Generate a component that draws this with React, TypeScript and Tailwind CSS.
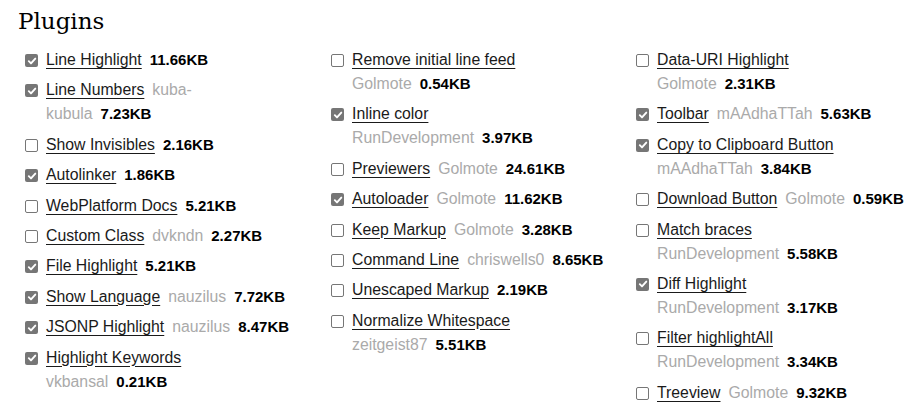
type Plugin = {
  name: string;
  author?: string;
  size: string;
  checked?: boolean;
  // where the item wraps: "meta" puts author + size on a second line,
  // "author" splits the author name itself (kuba-/kubula)
  wrap?: "meta" | "author";
  authorTail?: string;
};

const columns: Plugin[][] = [
  [
    { name: "Line Highlight", size: "11.66KB", checked: true },
    { name: "Line Numbers", author: "kuba-", authorTail: "kubula", size: "7.23KB", checked: true, wrap: "author" },
    { name: "Show Invisibles", size: "2.16KB" },
    { name: "Autolinker", size: "1.86KB", checked: true },
    { name: "WebPlatform Docs", size: "5.21KB" },
    { name: "Custom Class", author: "dvkndn", size: "2.27KB" },
    { name: "File Highlight", size: "5.21KB", checked: true },
    { name: "Show Language", author: "nauzilus", size: "7.72KB", checked: true },
    { name: "JSONP Highlight", author: "nauzilus", size: "8.47KB", checked: true },
    { name: "Highlight Keywords", author: "vkbansal", size: "0.21KB", checked: true, wrap: "meta" },
  ],
  [
    { name: "Remove initial line feed", author: "Golmote", size: "0.54KB", wrap: "meta" },
    { name: "Inline color", author: "RunDevelopment", size: "3.97KB", checked: true, wrap: "meta" },
    { name: "Previewers", author: "Golmote", size: "24.61KB" },
    { name: "Autoloader", author: "Golmote", size: "11.62KB", checked: true },
    { name: "Keep Markup", author: "Golmote", size: "3.28KB" },
    { name: "Command Line", author: "chriswells0", size: "8.65KB" },
    { name: "Unescaped Markup", size: "2.19KB" },
    { name: "Normalize Whitespace", author: "zeitgeist87", size: "5.51KB", wrap: "meta" },
  ],
  [
    { name: "Data-URI Highlight", author: "Golmote", size: "2.31KB", wrap: "meta" },
    { name: "Toolbar", author: "mAAdhaTTah", size: "5.63KB", checked: true },
    { name: "Copy to Clipboard Button", author: "mAAdhaTTah", size: "3.84KB", checked: true, wrap: "meta" },
    { name: "Download Button", author: "Golmote", size: "0.59KB" },
    { name: "Match braces", author: "RunDevelopment", size: "5.58KB", wrap: "meta" },
    { name: "Diff Highlight", author: "RunDevelopment", size: "3.17KB", checked: true, wrap: "meta" },
    { name: "Filter highlightAll", author: "RunDevelopment", size: "3.34KB", wrap: "meta" },
    { name: "Treeview", author: "Golmote", size: "9.32KB" },
  ],
];

function Box({ checked }: { checked?: boolean }) {
  if (checked) {
    return (
      <span className="mt-[6px] flex h-[13px] w-[13px] shrink-0 items-center justify-center rounded-[2px] bg-[#767676]">
        <svg width="10" height="10" viewBox="0 0 10 10">
          <path d="M1.8 5.2 L4 7.4 L8.3 2.6" fill="none" stroke="#fff" strokeWidth="1.9" strokeLinecap="round" strokeLinejoin="round" />
        </svg>
      </span>
    );
  }
  return <span className="mt-[6px] h-[13px] w-[13px] shrink-0 rounded-[2px] border border-[#767676] bg-white" />;
}

function Item({ p }: { p: Plugin }) {
  const author = (text?: string) =>
    text ? <span className="mr-2 text-[#aaaaaa]">{text}</span> : null;
  const size = <strong className="text-[15px] font-bold text-black">{p.size}</strong>;
  const link = <a className="mr-2 text-[#1a1a1a] underline underline-offset-[3px]">{p.name}</a>;

  return (
    <div className="flex gap-[8px]">
      <Box checked={p.checked} />
      <div className="whitespace-nowrap leading-6">
        {p.wrap === "meta" ? (
          <>
            {link}
            <br />
            {author(p.author)}
            {size}
          </>
        ) : p.wrap === "author" ? (
          <>
            {link}
            <span className="text-[#aaaaaa]">{p.author}</span>
            <br />
            {author(p.authorTail)}
            {size}
          </>
        ) : (
          <>
            {link}
            {author(p.author)}
            {size}
          </>
        )}
      </div>
    </div>
  );
}

export default function App() {
  return (
    <div className="h-[420px] w-[924px] overflow-hidden bg-white font-['Liberation_Sans',sans-serif] text-[15.8px] text-[#1a1a1a]">
      <h2 className="pl-[18px] pt-[6px] font-['DejaVu_Serif',serif] text-[23px] leading-[30px] text-black">
        Plugins
      </h2>
      <div className="mt-[12px] grid grid-cols-[306px_305px_1fr] pl-[25px]">
        {columns.map((col, i) => (
          <div key={i} className="flex flex-col gap-[6.4px]">
            {col.map((p) => (
              <Item key={p.name} p={p} />
            ))}
          </div>
        ))}
      </div>
    </div>
  );
}
